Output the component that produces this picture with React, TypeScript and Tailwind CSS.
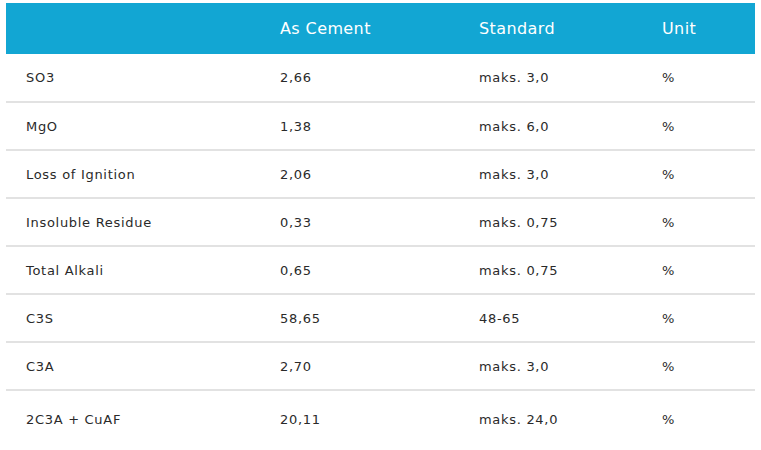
const rows = [
  ["SO3", "2,66", "maks. 3,0", "%"],
  ["MgO", "1,38", "maks. 6,0", "%"],
  ["Loss of Ignition", "2,06", "maks. 3,0", "%"],
  ["Insoluble Residue", "0,33", "maks. 0,75", "%"],
  ["Total Alkali", "0,65", "maks. 0,75", "%"],
  ["C3S", "58,65", "48-65", "%"],
  ["C3A", "2,70", "maks. 3,0", "%"],
  ["2C3A + CuAF", "20,11", "maks. 24,0", "%"],
];

export default function App() {
  return (
    <div className="w-[761px] h-[450px] bg-white pt-[3px] pl-[6px] overflow-hidden" style={{ fontFamily: '"DejaVu Sans", sans-serif' }}>
      <table className="w-[749px] table-fixed border-collapse text-[13px] tracking-[0.7px] text-[#2a2a2a]">
        <colgroup>
          <col className="w-[254px]" />
          <col className="w-[199px]" />
          <col className="w-[183px]" />
          <col className="w-[113px]" />
        </colgroup>
        <thead>
          <tr className="bg-[#12a6d3] text-white text-[16px] tracking-[0.4px] h-[51px]">
            <th className="text-left font-normal pl-[20px]"></th>
            <th className="text-left font-normal pl-[20px]">As Cement</th>
            <th className="text-left font-normal pl-[20px]">Standard</th>
            <th className="text-left font-normal pl-[20px]">Unit</th>
          </tr>
        </thead>
        <tbody>
          {rows.map((r, i) => (
            <tr
              key={i}
              className={i === rows.length - 1 ? "h-[58px]" : "h-[48px] border-b-2 border-[#e2e2e2]"}
            >
              {r.map((c, j) => (
                <td key={j} className="pl-[20px] pt-[1px]">
                  {c}
                </td>
              ))}
            </tr>
          ))}
        </tbody>
      </table>
    </div>
  );
}
